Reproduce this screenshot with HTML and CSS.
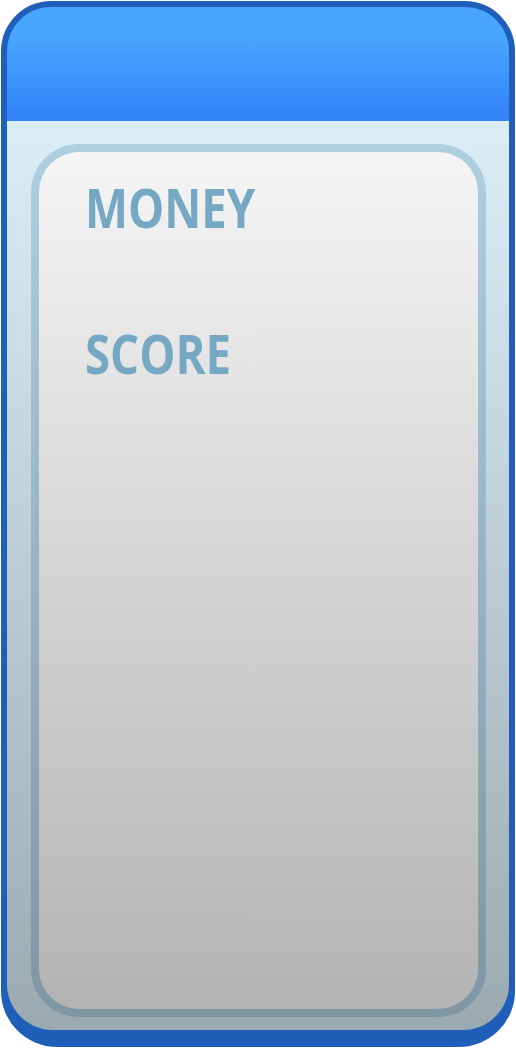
FILE: index.html
```html
<!DOCTYPE html>
<html>
<head>
<meta charset="utf-8">
<link rel="stylesheet" href="styles.css">
</head>
<body>
<div class="device">
  <div class="inner">
    <div class="header"></div>
    <div class="screen">
      <div class="panel">
        <div class="label money">MONEY</div>
        <div class="label score">SCORE</div>
      </div>
    </div>
  </div>
</div>
</body>
</html>
```
FILE: styles.css
```css
html, body {
  margin: 0;
  padding: 0;
  background: #ffffff;
}
body {
  padding: 1px;
  width: 516px;
  height: 1048px;
  box-sizing: border-box;
}
.device {
  width: 514px;
  height: 1046px;
  box-sizing: border-box;
  padding: 6px 6px 17px 6px;
  background: #1f5fb9;
  border-radius: 50px 50px 56px 56px;
  display: flex;
}
.inner {
  flex: 1;
  border-radius: 44px 44px 46px 46px;
  overflow: hidden;
  display: flex;
  flex-direction: column;
}
.header {
  height: 114px;
  flex: none;
  background: linear-gradient(to bottom, #48a6ff 0%, #48a6ff 25%, #3381f8 100%);
}
.screen {
  flex: 1;
  display: flex;
  padding: 23px 23px 13px 24px;
  background: linear-gradient(to bottom, #dbeef7 0%, #9aaab1 100%);
}
.panel {
  flex: 1;
  border: 8px solid transparent;
  border-radius: 48px;
  background:
    linear-gradient(to bottom, #f5f5f5, #b3b3b3) padding-box,
    linear-gradient(to bottom, #afcfe0, #7f96a3) border-box;
  padding: 26px 0 0 46px;
}
.label {
  font-family: "Open Sans", "Liberation Sans", sans-serif;
  font-weight: 700;
  font-size: 53px;
  letter-spacing: 0;
  color: #76a8c4;
  line-height: 60px;
  transform: scaleX(0.86);
  transform-origin: left top;
}
.score {
  margin-top: 86px;
}
```
